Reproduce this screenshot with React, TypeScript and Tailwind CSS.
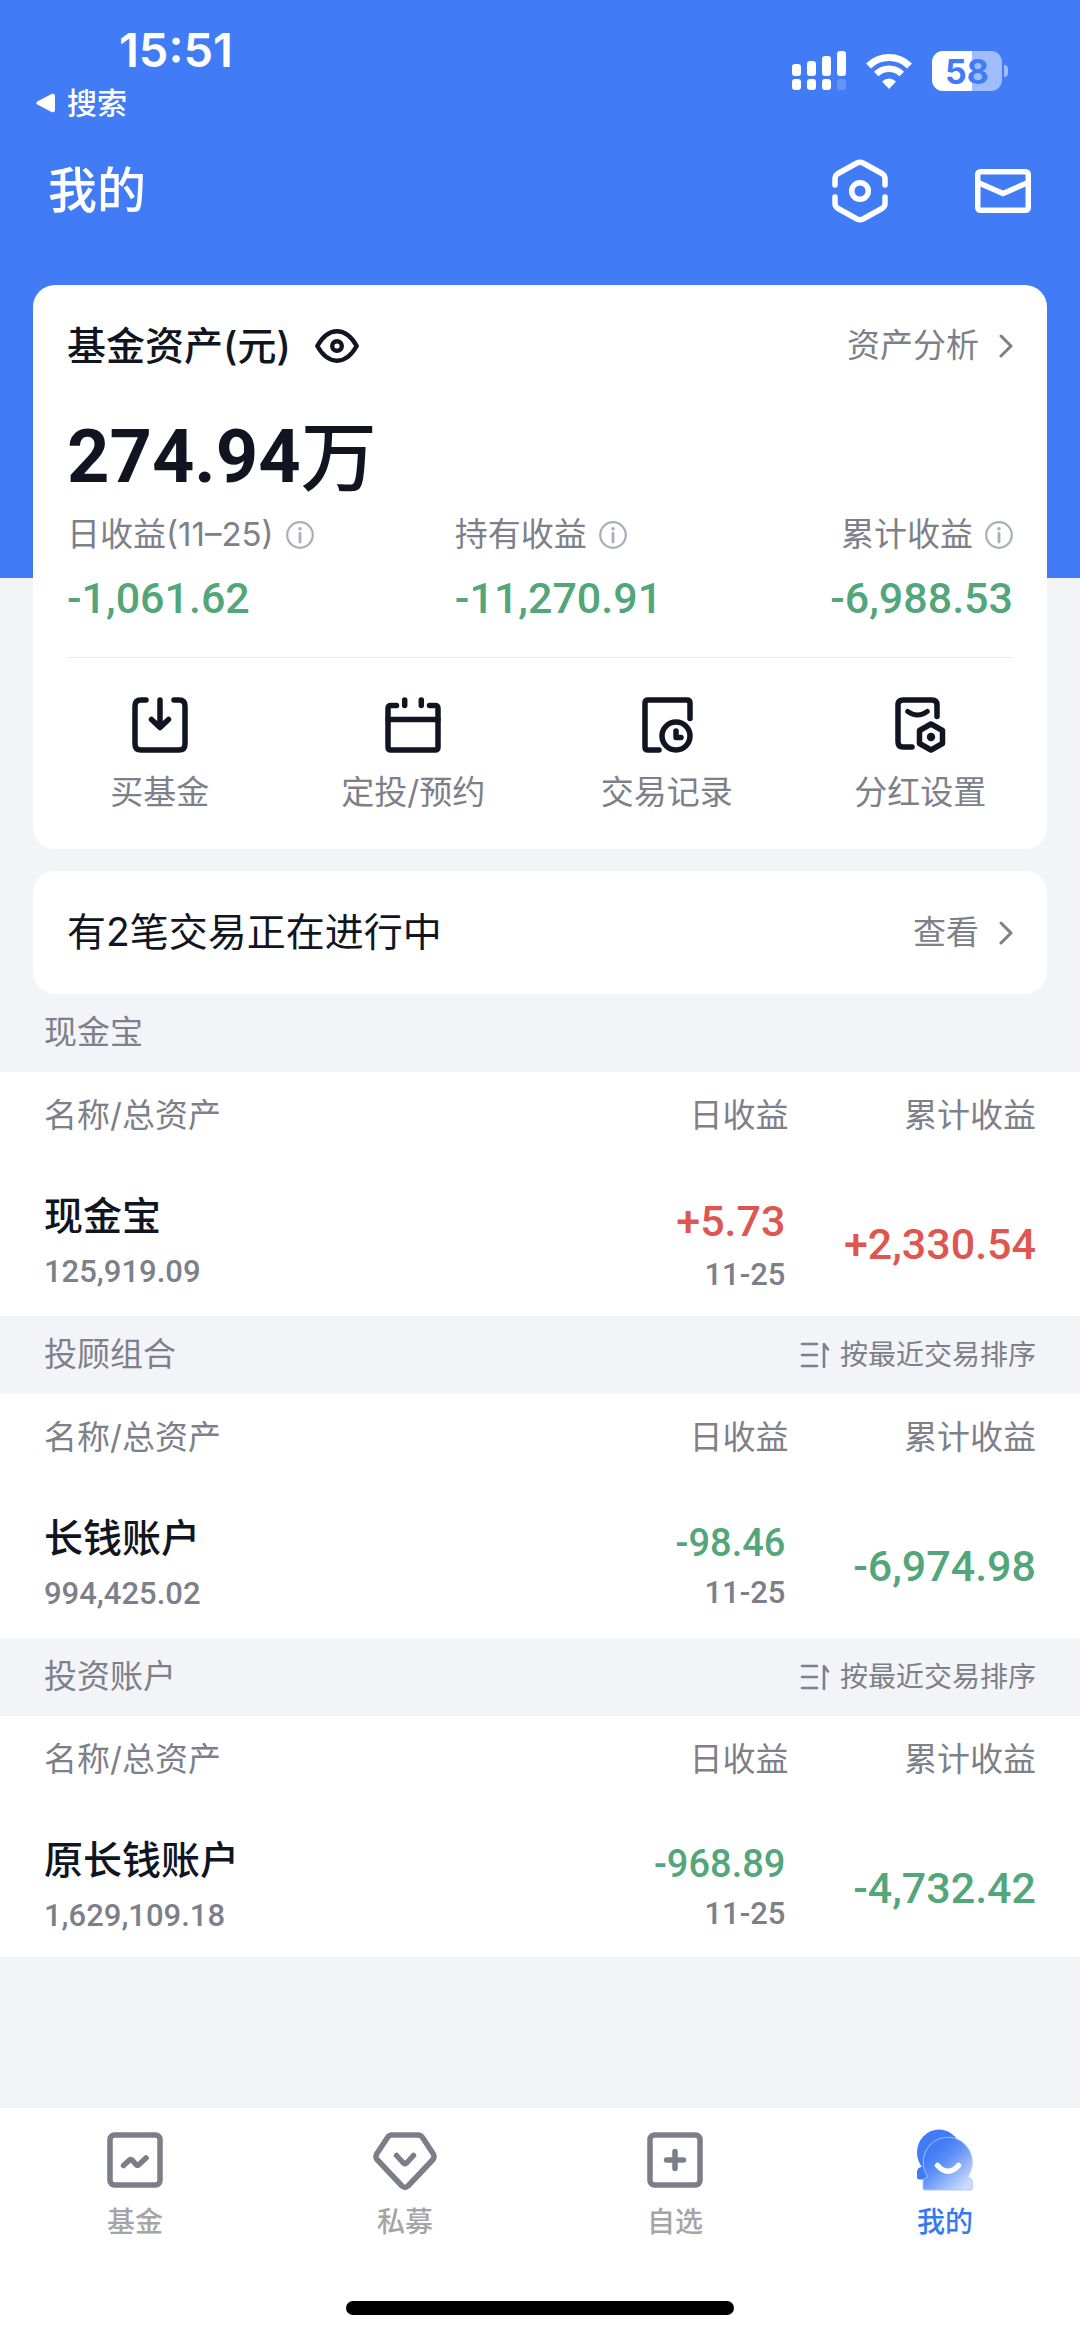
import type { ReactNode } from "react";

type Row = {
  title: string;
  sortable: boolean;
  name: string;
  asset: string;
  daily: string;
  dailySize: string;
  total: string;
  color: string;
};

const rows: Row[] = [
  {
    title: "现金宝",
    sortable: false,
    name: "现金宝",
    asset: "125,919.09",
    daily: "+5.73",
    dailySize: "text-[43px] leading-[56px]",
    total: "+2,330.54",
    color: "text-[#de564f]",
  },
  {
    title: "投顾组合",
    sortable: true,
    name: "长钱账户",
    asset: "994,425.02",
    daily: "-98.46",
    dailySize: "text-[38px] leading-[48px]",
    total: "-6,974.98",
    color: "text-[#53a679]",
  },
  {
    title: "投资账户",
    sortable: true,
    name: "原长钱账户",
    asset: "1,629,109.18",
    daily: "-968.89",
    dailySize: "text-[38px] leading-[48px]",
    total: "-4,732.42",
    color: "text-[#53a679]",
  },
];

const stats = [
  { label: "日收益(11–25)", value: "-1,061.62" },
  { label: "持有收益", value: "-11,270.91" },
  { label: "累计收益", value: "-6,988.53" },
];

function LineIcon({ children, box = "0 0 56 56", className = "h-14 w-14" }: { children: ReactNode; box?: string; className?: string }) {
  return (
    <svg
      viewBox={box}
      className={className}
      fill="none"
      stroke="currentColor"
      strokeWidth="5.5"
      strokeLinecap="round"
      strokeLinejoin="round"
      aria-hidden="true"
    >
      {children}
    </svg>
  );
}

function Chevron() {
  return (
    <LineIcon box="0 0 14 24" className="h-6 w-[14px]">
      <path d="M2 2 12 12 2 22" strokeWidth="3" />
    </LineIcon>
  );
}

function InfoIcon() {
  return (
    <svg viewBox="0 0 28 28" className="h-7 w-7 text-[#aaaebb]" fill="none" stroke="currentColor" aria-hidden="true">
      <circle cx="14" cy="14" r="12.8" strokeWidth="2.2" />
      <circle cx="14" cy="7.8" r="1.8" fill="currentColor" stroke="none" />
      <path d="M14 12.5V21" strokeWidth="2.8" strokeLinecap="round" />
    </svg>
  );
}

function SortIcon() {
  return (
    <LineIcon box="0 0 30 28" className="h-7 w-[30px]">
      <path d="M2 3H17M2 14H17M2 25H17M24 26V3L28 8.5" strokeWidth="2.6" />
    </LineIcon>
  );
}

function StatusIcons() {
  return (
    <div className="flex h-[98px] items-center">
      <svg viewBox="0 0 54 40" className="h-10 w-[54px]" fill="white" aria-hidden="true">
        <rect x="0" y="13" width="9" height="12" rx="3" />
        <rect x="15" y="10" width="9" height="15" rx="3" />
        <rect x="30" y="5" width="9" height="20" rx="3" />
        <rect x="45" y="0" width="9" height="25" rx="3" />
        <rect x="0" y="28" width="9" height="11" rx="3" />
        <rect x="15" y="28" width="9" height="11" rx="3" />
        <rect x="30" y="28" width="9" height="11" rx="3" />
        <rect x="45" y="28" width="9" height="11" rx="3" opacity="0.2" />
      </svg>
      <svg viewBox="0 0 46 36" className="ml-5 h-9 w-[46px]" fill="none" stroke="white" aria-hidden="true">
        <path d="M2.5 13A29 29 0 0 1 43.5 13" strokeWidth="7" />
        <path d="M10.2 21A18.5 18.5 0 0 1 35.8 21" strokeWidth="6.5" />
        <path d="M23 36 16 28.5Q23 22.5 30 28.5Z" fill="white" stroke="none" />
      </svg>
      <div className="ml-5 flex h-10 w-[70px] items-center justify-center rounded-[11px] bg-linear-to-r from-white from-57% to-[#a0bdfb] to-57% font-[Inter,sans-serif] text-[34px] font-bold text-[#417bf6]">
        58
      </div>
      <div className="ml-[2px] h-3 w-1 rounded-r-full bg-[#a0bdfb]" />
    </div>
  );
}

function Header() {
  return (
    <header className="bg-[#417bf6] pt-[22px] pb-[324px] text-white">
      <div className="flex justify-between pr-[72px] pl-9">
        <div>
          <div className="flex h-14 items-center pl-[83px] text-[47px] font-semibold">15:51</div>
          <button className="flex h-[50px] items-center gap-3 text-[30px] font-medium">
            <svg viewBox="0 0 19 20" className="h-5 w-[19px]" fill="white" aria-hidden="true">
              <path d="M1.2 8.6 16 .8Q19 0 19 3V17Q19 20 16 19.2L1.2 11.4Q-.6 10 1.2 8.6Z" />
            </svg>
            搜索
          </button>
        </div>
        <StatusIcons />
      </div>
      <div className="flex h-[126px] items-center justify-between pr-[49px] pl-12">
        <h1 className="text-[49px] font-medium">我的</h1>
        <div className="flex items-center gap-[83px]">
          <button aria-label="设置">
            <LineIcon box="0 0 64 64" className="h-16 w-16">
              <path d="M7 26V19.500Q7 16.500 10 14.500L29 4Q32 2.500 35 4L54 14.500Q57 16.500 57 19.500V26" />
              <path d="M7 38V44.500Q7 47.500 10 49.500L29 60Q32 61.500 35 60L54 49.500Q57 47.500 57 44.500V38" />
              <circle cx="32" cy="32" r="8.3" />
            </LineIcon>
          </button>
          <button aria-label="消息">
            <LineIcon box="0 0 56 44" className="h-11 w-14">
              <rect x="2.75" y="2.75" width="50.5" height="38.5" rx="2.5" />
              <path d="M4 14 28 24.500 52 14" />
            </LineIcon>
          </button>
        </div>
      </div>
    </header>
  );
}

function Action({ label, children }: { label: string; children: ReactNode }) {
  return (
    <button className="flex flex-col items-center">
      <LineIcon>{children}</LineIcon>
      <span className="mt-[14px] text-[33px] leading-[50px] text-[#7d8089]">{label}</span>
    </button>
  );
}

function AssetCard() {
  return (
    <section className="rounded-[22px] bg-white pt-[31px] pb-8">
      <div className="px-[34px]">
        <div className="flex h-15 items-center justify-between">
          <div className="flex items-center gap-6">
            <h2 className="text-[39px] font-medium">基金资产(元)</h2>
            <button aria-label="隐藏金额">
              <LineIcon box="0 0 44 34" className="h-[34px] w-11">
                <path d="M2.300 17C8 7 14 2.300 22 2.300S36 7 41.700 17C36 27 30 31.700 22 31.700S8 27 2.300 17Z" strokeWidth="4.4" />
                <circle cx="22" cy="17" r="4.8" strokeWidth="4.4" />
              </LineIcon>
            </button>
          </div>
          <a href="#analysis" className="flex items-center gap-5 text-[33px] text-[#7d8089]">
            资产分析
            <Chevron />
          </a>
        </div>

        <div className="mt-[31px] flex h-25 items-center">
          <span className="font-[Roboto,sans-serif] text-[74px] leading-none font-bold">274.94</span>
          <span className="text-[76px] leading-none font-medium">万</span>
        </div>

        <dl className="grid grid-cols-[41%_1fr_auto]">
          {stats.map((s) => (
            <div key={s.label} className="group">
              <dt className="flex h-14 items-center gap-3 text-[33px] text-[#7d8089] group-last:justify-end">
                {s.label}
                <InfoIcon />
              </dt>
              <dd className="font-[Roboto,sans-serif] text-[43px] leading-[70px] font-medium text-[#53a679] group-last:text-right">{s.value}</dd>
            </div>
          ))}
        </dl>
        <hr className="mt-6 border-[#e8e9ec]" />
      </div>

      {/* Quick actions */}
      <div className="mt-[39px] grid grid-cols-4">
        <Action label="买基金">
          <path d="M14 3H9Q3 3 3 9V47Q3 53 9 53H47Q53 53 53 47V9Q53 3 47 3H42" />
          <path d="M28 3V30M19.500 22.500 28 30.500 36.500 22.500" />
        </Action>
        <Action label="定投/预约">
          <path d="M11.500 8.500H6Q3 8.500 3 11.500V50Q3 53 6 53H50Q53 53 53 50V11.500Q53 8.500 50 8.500H44.500" />
          <path d="M19.700 3V8.500M36.300 3V8.500M3 22.500H53" />
        </Action>
        <Action label="交易记录">
          <path d="M51 21.500V6Q51 3 48 3H9Q6 3 6 6V50Q6 53 9 53H20" />
          <circle cx="37" cy="39" r="14" />
          <path d="M37 34V40.500H42" />
        </Action>
        <Action label="分红设置">
          <path d="M45 19.500V8Q45 3 40 3H11Q6 3 6 8V45Q6 50 11 50H20" />
          <path d="M15.700 14.500Q25.500 21.500 35.300 14.500" strokeWidth="5" />
          <path d="M39 27 50.500 33.500V46.500L39 53 27.500 46.500V33.500Z" />
          <circle cx="39" cy="40" r="4.2" fill="currentColor" stroke="none" />
        </Action>
      </div>
    </section>
  );
}

function AccountSection({ row }: { row: Row }) {
  return (
    <section className="group">
      <div className="flex h-[78px] items-center justify-between px-11 text-[#7d8089]">
        <h2 className="text-[33px]">{row.title}</h2>
        {row.sortable && (
          <button className="flex items-center gap-[10px] text-[28px]">
            <SortIcon />
            按最近交易排序
          </button>
        )}
      </div>
      <table className="w-full table-fixed bg-white">
        <thead>
          <tr className="h-22 text-[33px] text-[#7d8089]">
            <th className="pl-11 text-left font-normal">名称/总资产</th>
            <th className="w-[24%] text-right font-normal">日收益</th>
            <th className="w-[27%] pr-11 text-right font-normal">累计收益</th>
          </tr>
        </thead>
        <tbody>
          <tr>
            <td className="pt-7 pb-4 pl-11 group-last:pb-[13px]">
              <div className="text-[39px] leading-[56px] font-medium">{row.name}</div>
              <div className="font-[Roboto,sans-serif] text-[31px] leading-[56px] font-medium text-[#7d8089]">{row.asset}</div>
            </td>
            <td className="pt-8 pr-[3px] pb-[14px] text-right font-[Roboto,sans-serif] font-medium">
              <div className={`${row.dailySize} ${row.color}`}>{row.daily}</div>
              <div className="text-[31px] leading-[52px] text-[#7d8089]">11-25</div>
            </td>
            <td className={`pt-7 pr-11 pb-4 text-right font-[Roboto,sans-serif] text-[43px] font-medium group-last:pb-[13px] ${row.color}`}>
              {row.total}
            </td>
          </tr>
        </tbody>
      </table>
    </section>
  );
}

function MineIcon() {
  return (
    <svg viewBox="0 0 56 62" className="-mt-[3px] h-[62px] w-14" aria-hidden="true">
      <defs>
        <linearGradient id="face" x1="0.25" y1="0.25" x2="0.85" y2="0.95">
          <stop offset="0" stopColor="#437df6" />
          <stop offset="0.3" stopColor="#5c8ff7" />
          <stop offset="1" stopColor="#ccdcfc" />
        </linearGradient>
      </defs>
      <ellipse cx="22" cy="23.5" rx="22" ry="23" fill="#417bf6" />
      <path d="M4 38Q0 39 0 43V48Q0 50.500 2.500 50.500H12V38Z" fill="#417bf6" />
      <path
        d="M11 48A24.500 25 0 1 1 50.500 48Q55.300 49 55.300 53V59Q55.300 61 53.300 61H8Q6 61 6 59V53Q6 49 11 48Z"
        fill="url(#face)"
        stroke="#a9c4fb"
        strokeWidth="0.9"
      />
      <path d="M20.500 36.500Q31 48 41.500 36.500" fill="none" stroke="white" strokeWidth="5.5" strokeLinecap="round" />
    </svg>
  );
}

function Tab({ label, active = false, children }: { label: string; active?: boolean; children: ReactNode }) {
  return (
    <a href="#tab" className="flex flex-col items-center text-[#7b7e88]" aria-current={active ? "page" : undefined}>
      <span className="flex h-[67px] items-start">{children}</span>
      <span className={`text-[28px] leading-[46px] font-medium ${active ? "text-[#3579f6]" : "text-[#a5a5a5]"}`}>{label}</span>
    </a>
  );
}

function TabBar() {
  return (
    <footer className="mt-auto bg-white pt-6 pb-[22px]">
      <nav className="grid grid-cols-4">
        <Tab label="基金">
          <LineIcon>
            <rect x="3" y="3" width="50" height="50" rx="4.5" />
            <path d="M16.500 33.500 22.500 28Q24 27 25.500 28.500L29 32.500Q30.500 34 32 32.500L39 26" />
          </LineIcon>
        </Tab>
        <Tab label="私募">
          <LineIcon box="0 0 64 58" className="h-[58px] w-16">
            <path d="M19 3H45Q48 3 49.500 5.500L60 21.500Q62 24.500 60 27.500L35 54Q32 56.500 29 54L4 27.500Q2 24.500 4 21.500L14.500 5.500Q16 3 19 3Z" />
            <path d="M23.500 23.500 30 30.500Q32 32.500 34 30.500L40.500 23.500" />
          </LineIcon>
        </Tab>
        <Tab label="自选">
          <LineIcon>
            <rect x="3" y="3" width="50" height="50" rx="4.5" />
            <path d="M28 19.500V36.500M19.500 28H36.500" />
          </LineIcon>
        </Tab>
        <Tab label="我的" active>
          <MineIcon />
        </Tab>
      </nav>
      <div className="mx-auto mt-14 h-[14px] w-[36%] rounded-full bg-black" />
    </footer>
  );
}

export default function App() {
  return (
    <div className="flex min-h-screen flex-col bg-[#f3f4f7] font-[Inter,'Noto_Sans_CJK_SC',sans-serif] text-[#111522]">
      <Header />

      {/* Main Content */}
      <main className="-mt-[293px]">
        <div className="flex flex-col gap-[22px] px-[33px]">
          <AssetCard />
          <a href="#pending" className="flex h-[123px] items-center justify-between rounded-[22px] bg-white px-[34px]">
            <span className="text-[39px]">有2笔交易正在进行中</span>
            <span className="flex items-center gap-5 text-[33px] text-[#7d8089]">
              查看
              <Chevron />
            </span>
          </a>
        </div>
        <div>
          {rows.map((row) => (
            <AccountSection key={row.title} row={row} />
          ))}
        </div>
      </main>

      <TabBar />
    </div>
  );
}
